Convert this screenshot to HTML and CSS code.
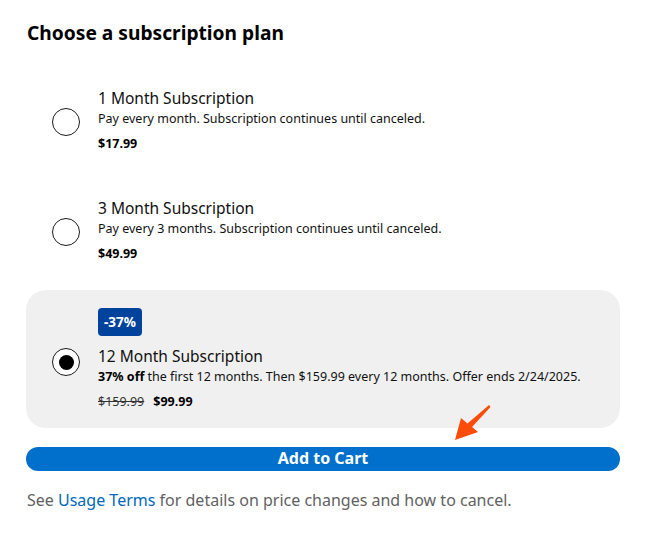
FILE: index.html
```html
<!DOCTYPE html>
<html lang="en">
<head>
<meta charset="utf-8">
<title>Choose a subscription plan</title>
<link rel="stylesheet" href="styles.css">
</head>
<body>
<main class="page">
  <h1 class="heading">Choose a subscription plan</h1>
  <div class="plans">
    <div class="option">
      <span class="radio"></span>
      <div class="info">
        <div class="title">1 Month Subscription</div>
        <div class="desc">Pay every month. Subscription continues until canceled.</div>
        <div class="price"><strong>$17.99</strong></div>
      </div>
    </div>
    <div class="option">
      <span class="radio"></span>
      <div class="info">
        <div class="title">3 Month Subscription</div>
        <div class="desc">Pay every 3 months. Subscription continues until canceled.</div>
        <div class="price"><strong>$49.99</strong></div>
      </div>
    </div>
    <div class="option selected">
      <span class="radio checked"></span>
      <div class="info">
        <span class="badge">-37%</span>
        <div class="title title-badged">12 Month Subscription</div>
        <div class="desc"><strong>37% off</strong> the first 12 months. Then $159.99 every 12 months. Offer ends 2/24/2025.</div>
        <div class="price"><s class="old">$159.99</s><strong>$99.99</strong></div>
      </div>
    </div>
  </div>
  <div class="cart-wrap">
    <button class="cart">Add to Cart</button>
    <svg class="arrow" width="40" height="40" viewBox="0 0 40 40">
      <path d="M35 1 L36.5 3 L18 23 L24 28 L1 36 L7 14 L13.5 19.5 Z" fill="#fc4c0a"/>
    </svg>
  </div>
  <p class="footer">See <a class="link" href="#">Usage Terms</a> for details on price changes and how to cancel.</p>
</main>
</body>
</html>
```
FILE: styles.css
```css
* { box-sizing: border-box; }
body {
  margin: 0;
  background: #fff;
  font-family: "Noto Sans", "Open Sans", sans-serif;
  color: #000;
}
.page {
  width: 646px;
  padding: 19px 26px 0 26px;
}
.heading {
  margin: 0 0 23px 1px;
  font-size: 19.2px;
  line-height: 28px;
  font-weight: 700;
}
.plans {
  display: flex;
  flex-direction: column;
  gap: 11px;
}
.option {
  display: flex;
  align-items: center;
  gap: 18px;
  padding: 17px 26px 15px 26px;
  border-radius: 20px;
}
.option.selected {
  background: #f0f0f0;
  padding-top: 18px;
  padding-bottom: 16px;
}
.radio {
  flex: none;
  width: 28px;
  height: 28px;
  border: 1.5px solid #1a1a1a;
  border-radius: 50%;
  background: #fff;
  display: flex;
  align-items: center;
  justify-content: center;
  margin-top: 3px;
}
.radio.checked::after {
  content: "";
  width: 15px;
  height: 15px;
  border-radius: 50%;
  background: #000;
}
.option.selected .radio { margin-top: 4px; }
.info { display: flex; flex-direction: column; align-items: flex-start; }
.title {
  font-size: 15.5px;
  line-height: 22px;
  color: #111;
}
.title-badged { margin-top: 9px; }
.desc {
  font-size: 12.5px;
  line-height: 20px;
  color: #111;
}
.desc strong { font-weight: 700; color: #000; }
.price {
  margin-top: 5px;
  font-size: 12.5px;
  line-height: 20px;
}
.price strong { font-weight: 700; }
.old {
  color: #333;
  margin-right: 9px;
}
.badge {
  display: inline-block;
  height: 28px;
  line-height: 28px;
  padding: 0 6px;
  background: #00439c;
  color: #fff;
  font-weight: 700;
  font-size: 13.5px;
  border-radius: 4px;
}
.cart-wrap {
  position: relative;
  margin-top: 19px;
}
.cart {
  display: block;
  width: 594px;
  height: 24px;
  border: 0;
  border-radius: 12px;
  background: #0070cc;
  color: #fff;
  font-family: "Noto Sans", "Open Sans", sans-serif;
  font-weight: 700;
  font-size: 16px;
  line-height: 22px;
  padding: 0 0 2px 0;
}
.arrow {
  position: absolute;
  left: 428px;
  top: -43px;
}
.footer {
  margin: 19px 0 0 1px;
  font-size: 16px;
  line-height: 20px;
  color: #626262;
}
.link {
  color: #0068bd;
  text-decoration: none;
}
```
